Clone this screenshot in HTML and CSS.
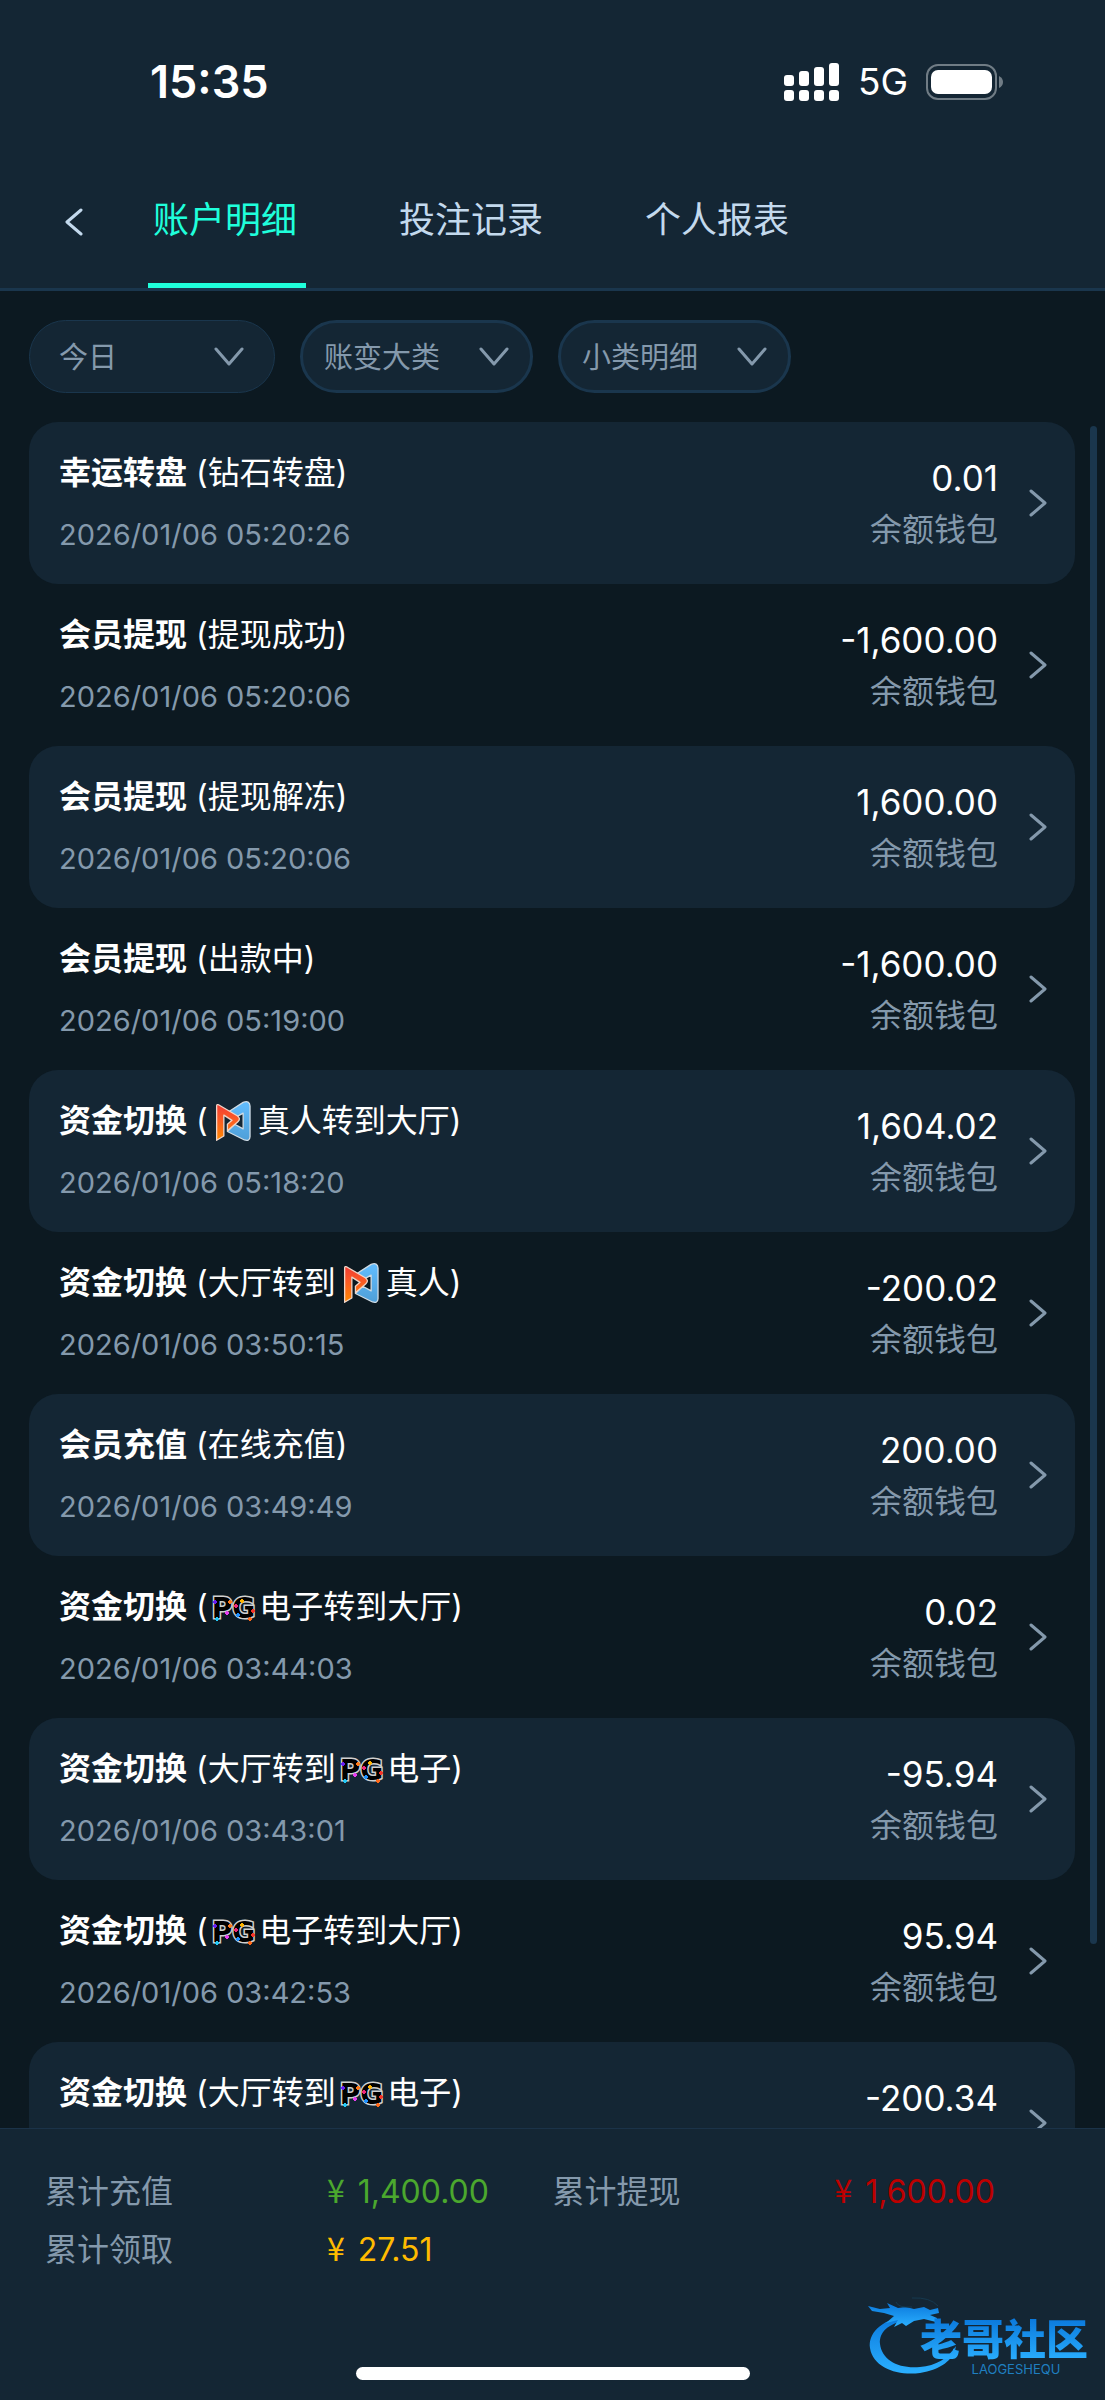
FILE: index.html
```html
<!DOCTYPE html>
<html lang="zh-CN">
<head>
<meta charset="utf-8">
<meta name="viewport" content="width=device-width, initial-scale=1">
<title>账户明细</title>
<link rel="stylesheet" href="styles.css">
</head>
<body>
<svg class="defs" aria-hidden="true">
  <defs>
    <linearGradient id="flame" x1="0" y1="0" x2="0" y2="1"><stop offset="0" stop-color="#f23c33"/><stop offset=".4" stop-color="#fb5a26"/><stop offset="1" stop-color="#ff8a00"/></linearGradient>
    <linearGradient id="sky" x1="0" y1="0" x2="0" y2="1"><stop offset="0" stop-color="#62bdff"/><stop offset="1" stop-color="#4f9fd8"/></linearGradient>
    <linearGradient id="dragon" x1="0" y1="0" x2="0" y2="1"><stop offset="0" stop-color="#0a78dc"/><stop offset="1" stop-color="#2bb0ff"/></linearGradient>
  </defs>
  <symbol id="live" viewBox="0 0 110 128">
    <path d="M44 34 86 7Q106 0 107 18V112Q106 127 90 122L38 96 60 74 86 88V40L64 52Z" fill="url(#sky)" stroke="#cfdbe4" stroke-width="4" stroke-linejoin="round"/>
    <path d="M5 18Q5 12 12 15L68 48Q80 57 70 66L38 94V74L52 62 27 46V110L5 123Z" fill="url(#flame)" stroke="#f0d5c8" stroke-width="4" stroke-linejoin="round"/>
  </symbol>
  <symbol id="down" viewBox="0 0 30 20"><path d="M2 2 15 17 28 2" fill="none" stroke="currentColor" stroke-width="3" stroke-linecap="round" stroke-linejoin="round"/></symbol>
  <symbol id="next" viewBox="0 0 18 28"><path d="M2 2 16 14 2 26" fill="none" stroke="currentColor" stroke-width="3" stroke-linecap="round" stroke-linejoin="round"/></symbol>
</svg>

<header class="top">
  <div class="status">
    <span class="clock">15:35</span>
    <div class="signals">
      <svg class="bars" viewBox="0 0 56 38" fill="#fff"><rect x="0" y="12" width="10" height="11" rx="3"/><rect x="15" y="8" width="10" height="15" rx="3"/><rect x="30" y="4" width="10" height="19" rx="3"/><rect x="45" y="0" width="10" height="23" rx="3"/><rect x="0" y="27" width="10" height="11" rx="3"/><rect x="15" y="27" width="10" height="11" rx="3"/><rect x="30" y="27" width="10" height="11" rx="3"/><rect x="45" y="27" width="10" height="11" rx="3"/></svg>
      <span class="network">5G</span>
      <svg class="battery" viewBox="0 0 78 36"><rect x="1" y="1" width="69" height="34" rx="11" fill="none" stroke="#707c85" stroke-width="2"/><rect x="5" y="6" width="61" height="24" rx="7" fill="#fff"/><path d="M73 12Q77 14 77 18T73 24Z" fill="#707c85"/></svg>
    </div>
  </div>
  <nav class="tabs">
    <button class="back" type="button" aria-label="返回"><svg viewBox="0 0 18 28"><path d="M16 2 2 14 16 26" fill="none" stroke="currentColor" stroke-width="3" stroke-linecap="round" stroke-linejoin="round"/></svg></button>
    <a class="tab active" href="#detail">账户明细</a>
    <a class="tab" href="#bets">投注记录</a>
    <a class="tab" href="#report">个人报表</a>
  </nav>
</header>

<form class="filters">
  <label class="pill date"><select aria-label="日期"><option>今日</option></select><svg><use href="#down"/></svg></label>
  <label class="pill"><select aria-label="账变大类"><option>账变大类</option></select><svg><use href="#down"/></svg></label>
  <label class="pill"><select aria-label="小类明细"><option>小类明细</option></select><svg><use href="#down"/></svg></label>
</form>

<main class="records">
  <ul class="list">
    <li><a class="row" href="#r1"><div class="info"><p class="title"><b>幸运转盘</b> (钻石转盘)</p><time>2026/01/06 05:20:26</time></div><div class="sum"><p class="amount">0.01</p><p class="wallet">余额钱包</p></div><svg class="next"><use href="#next"/></svg></a></li>
    <li><a class="row" href="#r2"><div class="info"><p class="title"><b>会员提现</b> (提现成功)</p><time>2026/01/06 05:20:06</time></div><div class="sum"><p class="amount">-1,600.00</p><p class="wallet">余额钱包</p></div><svg class="next"><use href="#next"/></svg></a></li>
    <li><a class="row" href="#r3"><div class="info"><p class="title"><b>会员提现</b> (提现解冻)</p><time>2026/01/06 05:20:06</time></div><div class="sum"><p class="amount">1,600.00</p><p class="wallet">余额钱包</p></div><svg class="next"><use href="#next"/></svg></a></li>
    <li><a class="row" href="#r4"><div class="info"><p class="title"><b>会员提现</b> (出款中)</p><time>2026/01/06 05:19:00</time></div><div class="sum"><p class="amount">-1,600.00</p><p class="wallet">余额钱包</p></div><svg class="next"><use href="#next"/></svg></a></li>
    <li><a class="row" href="#r5"><div class="info"><p class="title"><b>资金切换</b> (<svg class="live"><use href="#live"/></svg>真人转到大厅)</p><time>2026/01/06 05:18:20</time></div><div class="sum"><p class="amount">1,604.02</p><p class="wallet">余额钱包</p></div><svg class="next"><use href="#next"/></svg></a></li>
    <li><a class="row" href="#r6"><div class="info"><p class="title"><b>资金切换</b> (大厅转到<svg class="live"><use href="#live"/></svg>真人)</p><time>2026/01/06 03:50:15</time></div><div class="sum"><p class="amount">-200.02</p><p class="wallet">余额钱包</p></div><svg class="next"><use href="#next"/></svg></a></li>
    <li><a class="row" href="#r7"><div class="info"><p class="title"><b>会员充值</b> (在线充值)</p><time>2026/01/06 03:49:49</time></div><div class="sum"><p class="amount">200.00</p><p class="wallet">余额钱包</p></div><svg class="next"><use href="#next"/></svg></a></li>
    <li><a class="row" href="#r8"><div class="info"><p class="title"><b>资金切换</b> (<span class="pg">PG</span>电子转到大厅)</p><time>2026/01/06 03:44:03</time></div><div class="sum"><p class="amount">0.02</p><p class="wallet">余额钱包</p></div><svg class="next"><use href="#next"/></svg></a></li>
    <li><a class="row" href="#r9"><div class="info"><p class="title"><b>资金切换</b> (大厅转到<span class="pg">PG</span>电子)</p><time>2026/01/06 03:43:01</time></div><div class="sum"><p class="amount">-95.94</p><p class="wallet">余额钱包</p></div><svg class="next"><use href="#next"/></svg></a></li>
    <li><a class="row" href="#r10"><div class="info"><p class="title"><b>资金切换</b> (<span class="pg">PG</span>电子转到大厅)</p><time>2026/01/06 03:42:53</time></div><div class="sum"><p class="amount">95.94</p><p class="wallet">余额钱包</p></div><svg class="next"><use href="#next"/></svg></a></li>
    <li><a class="row" href="#r11"><div class="info"><p class="title"><b>资金切换</b> (大厅转到<span class="pg">PG</span>电子)</p></div><div class="sum"><p class="amount">-200.34</p></div><svg class="next"><use href="#next"/></svg></a></li>
  </ul>
  <div class="thumb"></div>
</main>

<footer class="bottom">
  <dl class="totals">
    <div class="total"><dt>累计充值</dt><dd class="green"><span class="yen">¥</span> 1,400.00</dd></div>
    <div class="total"><dt>累计提现</dt><dd class="red"><span class="yen">¥</span> 1,600.00</dd></div>
    <div class="total"><dt>累计领取</dt><dd class="gold"><span class="yen">¥</span> 27.51</dd></div>
  </dl>
  <div class="home"></div>
  <div class="mark">
    <svg class="dragon" viewBox="0 0 96 80" fill="url(#dragon)">
      <path d="M38 20C12 24 0 38 2 52C5 72 30 80 52 77C72 74 86 64 88 50C80 62 68 70 52 71C30 73 14 64 12 48C11 36 20 28 38 24Z"/>
      <path d="M0 10 12 13 22 12 19 7 30 12 38 11 46 13 56 11 62 14 70 12 71 17 62 19 69 22 68 26 56 23 46 25 38 30 34 27 26 31 30 24 18 27 26 20 16 17 4 15Z"/>
      <path d="M28 6Q30 12 44 11M44 2Q62 1 70 10" fill="none" stroke="#16394f" stroke-width="1"/>
    </svg>
    <div class="brand"><span class="brand-cn">老哥社区</span><span class="brand-en">LAOGESHEQU</span></div>
  </div>
</footer>
</body>
</html>
```
FILE: styles.css
```css
* { box-sizing: border-box; }

:root {
  --page: #0c1921;
  --panel: #142634;
  --line: #1a364d;
  --muted: #8499ac;
  --tab: #c3d9ed;
  --accent: #1fffdb;
}

body {
  margin: 0;
  height: 100vh;
  display: flex;
  flex-direction: column;
  background: var(--page);
  color: #fff;
  font-family: Inter, "Noto Sans CJK SC", sans-serif;
  font-size: 32px;
  line-height: 44px;
}

p, ul, dl, dd { margin: 0; padding: 0; }
a { color: inherit; text-decoration: none; }
.defs { position: absolute; width: 0; height: 0; }

.top {
  flex: none;
  background: var(--panel);
  border-bottom: 3px solid var(--line);
}

.status {
  display: flex;
  align-items: center;
  justify-content: space-between;
  padding: 54px 101px 42px 150px;
  line-height: 56px;
}
.clock { font-size: 45px; font-weight: 600; }
.signals { display: flex; align-items: center; }
.bars { width: 56px; height: 38px; }
.network { margin: 0 18px; font-size: 37px; }
.battery { width: 78px; height: 36px; }

.tabs { display: flex; height: 136px; }
.back {
  width: 148px;
  padding: 0 0 0 65px;
  border: 0;
  background: none;
  color: var(--tab);
  text-align: left;
}
.back svg { display: block; width: 18px; height: 28px; margin-top: 3px; }
.tab {
  margin-right: 88px;
  padding: 0 9px 0 5px;
  border-bottom: 5px solid transparent;
  color: var(--tab);
  font-size: 36px;
  line-height: 137px;
}
.tab.active { color: var(--accent); border-color: var(--accent); }

.filters {
  flex: none;
  display: flex;
  gap: 25px;
  padding: 29px;
}
.pill { display: grid; align-items: center; width: 233px; color: var(--muted); }
.pill.date { width: 246px; }
.pill select, .pill svg { grid-area: 1 / 1; }
.pill select {
  appearance: none;
  width: 100%;
  height: 73px;
  padding: 2px 21px 0;
  border: 3px solid var(--line);
  border-radius: 37px;
  background: var(--panel);
  color: inherit;
  font: inherit;
  font-size: 29px;
}
.pill.date select { padding: 2px 29px 0; border-width: 1px; }
.pill svg {
  justify-self: end;
  width: 30px;
  height: 20px;
  margin-right: 24px;
  pointer-events: none;
}
.pill.date svg { margin-right: 31px; }

.records { flex: 1; min-height: 0; position: relative; }
.list {
  height: 100%;
  padding: 0 30px 0 29px;
  overflow-y: auto;
  scrollbar-width: none;
  list-style: none;
}
.list li { border-radius: 29px; }
.list li:nth-child(odd) { background: var(--panel); }
.row {
  display: flex;
  align-items: center;
  min-height: 162px;
  padding: 27px 28px 27px 30px;
}
.info { flex: 1; align-self: flex-start; display: grid; gap: 18px; padding-top: 2px; }
.title { height: 44px; white-space: nowrap; }
.title b { font-weight: 700; }
.title svg { vertical-align: middle; }
time { color: var(--muted); font-size: 29px; }
.sum { display: grid; gap: 8px; align-self: flex-start; padding-top: 7px; text-align: right; }
.amount { font-size: 35px; }
.wallet { color: var(--muted); }
.next { width: 18px; height: 28px; margin-left: 31px; color: var(--muted); }
.live { width: 36px; height: 42px; margin: -4px 7px 0; }
.pg {
  display: inline-block;
  position: relative;
  margin: 0 4px;
  color: #000;
  font: 700 28px/28px "DejaVu Sans", sans-serif;
  -webkit-text-stroke: 3px #d0d0d0;
  paint-order: stroke fill;
}
.pg::after {
  content: "";
  position: absolute;
  inset: 0;
  background:
    radial-gradient(circle at 3px 7px, #6a1ff0 2px, transparent 2px),
    radial-gradient(circle at 18px 7px, #ff7a1a 2px, transparent 2px),
    radial-gradient(circle at 15px 18px, #e83df0 2px, transparent 2px),
    radial-gradient(circle at 5px 24px, #25c8f5 2px, transparent 2px),
    radial-gradient(circle at 30px 6px, #ffb400 2px, transparent 2px),
    radial-gradient(circle at 24px 11px, #f02878 2px, transparent 2px),
    radial-gradient(circle at 26px 20px, #1e90ff 2px, transparent 2px),
    radial-gradient(circle at 41px 16px, #f5352a 2px, transparent 2px),
    radial-gradient(circle at 38px 24px, #ff6a1a 2px, transparent 2px);
}
.thumb {
  position: absolute;
  top: 4px;
  right: 8px;
  width: 7px;
  height: 89%;
  border-radius: 4px;
  background: var(--line);
}

.bottom {
  flex: none;
  position: relative;
  display: flex;
  flex-direction: column;
  justify-content: space-between;
  min-height: 272px;
  padding: 41px 45px 20px;
  border-top: 1px solid #1b3349;
  background: var(--panel);
}
.totals { display: grid; grid-template-columns: 1fr 1fr; row-gap: 14px; }
.total { display: grid; grid-template-columns: 5fr 4fr; height: 44px; }
dt { color: var(--muted); }
.yen { margin-right: 4px; font-family: "Noto Sans CJK SC", sans-serif; line-height: 32px; }
.green { color: #4ba82e; }
.red { color: #bd0000; }
.gold { color: #ffbb00; }
.home {
  align-self: center;
  width: 394px;
  height: 13px;
  border-radius: 7px;
  background: #fff;
}
.mark { position: absolute; right: 17px; bottom: 24px; display: flex; }
.dragon { width: 96px; height: 80px; }
.brand {
  display: flex;
  flex-direction: column;
  align-items: center;
  margin: 22px 0 0 -44px;
}
.brand-cn {
  background: linear-gradient(#0a78dc, #2bb0ff);
  background-clip: text;
  color: transparent;
  font-size: 42px;
  font-weight: 900;
}
.brand-en { padding-left: 24px; color: #1f7fc0; font-size: 13px; line-height: 14px; }
```
